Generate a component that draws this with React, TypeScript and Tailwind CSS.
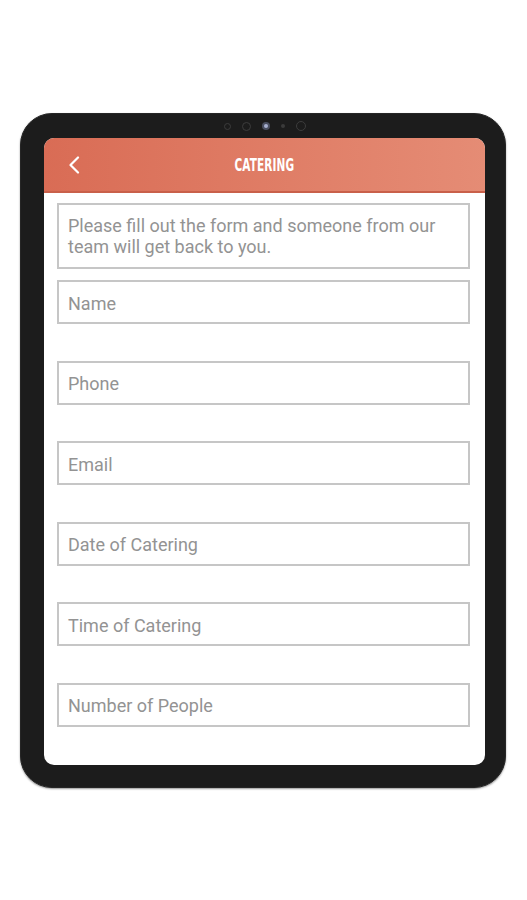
const fields = [
    "Name",
    "Phone",
    "Email",
    "Date of Catering",
    "Time of Catering",
    "Number of People",
];

function CameraDots() {
    return (
        <div className="flex h-[24px] items-center justify-center gap-[11px]">
            <span className="h-[7px] w-[7px] rounded-full border border-[#3c3c3c]" />
            <span className="h-[9px] w-[9px] rounded-full border border-[#3c3c3c]" />
            <span className="flex h-[8px] w-[8px] items-center justify-center rounded-full bg-[#4a4f60]">
                <span className="h-[4px] w-[4px] rounded-full bg-[#a8b0d0]" />
            </span>
            <span className="h-[4px] w-[4px] rounded-full bg-[#3a3a3a]" />
            <span className="h-[10px] w-[10px] rounded-full border border-[#3c3c3c]" />
        </div>
    );
}

export default function App() {
    return (
        <div className="h-[900px] w-[527px] bg-white pt-[113px] pl-[20px]">
            <div className="h-[675px] w-[486px] rounded-[32px] border border-[#262626] bg-[#1c1c1c] pr-[20px] pl-[23px] shadow-[0_1px_2px_rgba(0,0,0,0.4)]">
                <CameraDots />
                <div className="h-[627px] w-[441px] overflow-hidden rounded-[10px] bg-white">
                    <div className="flex h-[55px] items-center border-b-2 border-[#c9604a] bg-gradient-to-r from-[#d96c55] to-[#e58c75] px-[24px]">
                        <svg width="12" height="18" viewBox="0 0 12 18" className="shrink-0">
                            <polyline
                                points="10,1.5 2.5,9 10,16.5"
                                fill="none"
                                stroke="white"
                                strokeWidth="2.2"
                                strokeLinecap="round"
                                strokeLinejoin="round"
                            />
                        </svg>
                        <div className="flex flex-1 justify-center pt-[3px] pr-[12px]">
                            <h1 className="inline-block scale-x-[0.62] font-['DejaVu_Sans','Liberation_Sans',sans-serif] text-[17px] font-bold tracking-[0.2px] text-white">
                                CATERING
                            </h1>
                        </div>
                    </div>
                    <div className="flex flex-col pt-[10px] pr-[15px] pl-[13px] font-['Roboto','Liberation_Sans',sans-serif] text-[18px] text-[#939393]">
                        <div className="h-[66px] border-2 border-[#c6c6c6] px-[9px] pt-[10px] leading-[21px]">
                            Please fill out the form and someone from our team will get back to you.
                        </div>
                        {fields.map((label, i) => (
                            <div
                                key={label}
                                className={`flex h-[44px] items-center border-2 border-[#c6c6c6] px-[9px] pt-[2px] ${
                                    i === 0 ? "mt-[11px]" : "mt-[36.5px]"
                                }`}
                            >
                                {label}
                            </div>
                        ))}
                    </div>
                </div>
            </div>
        </div>
    );
}
